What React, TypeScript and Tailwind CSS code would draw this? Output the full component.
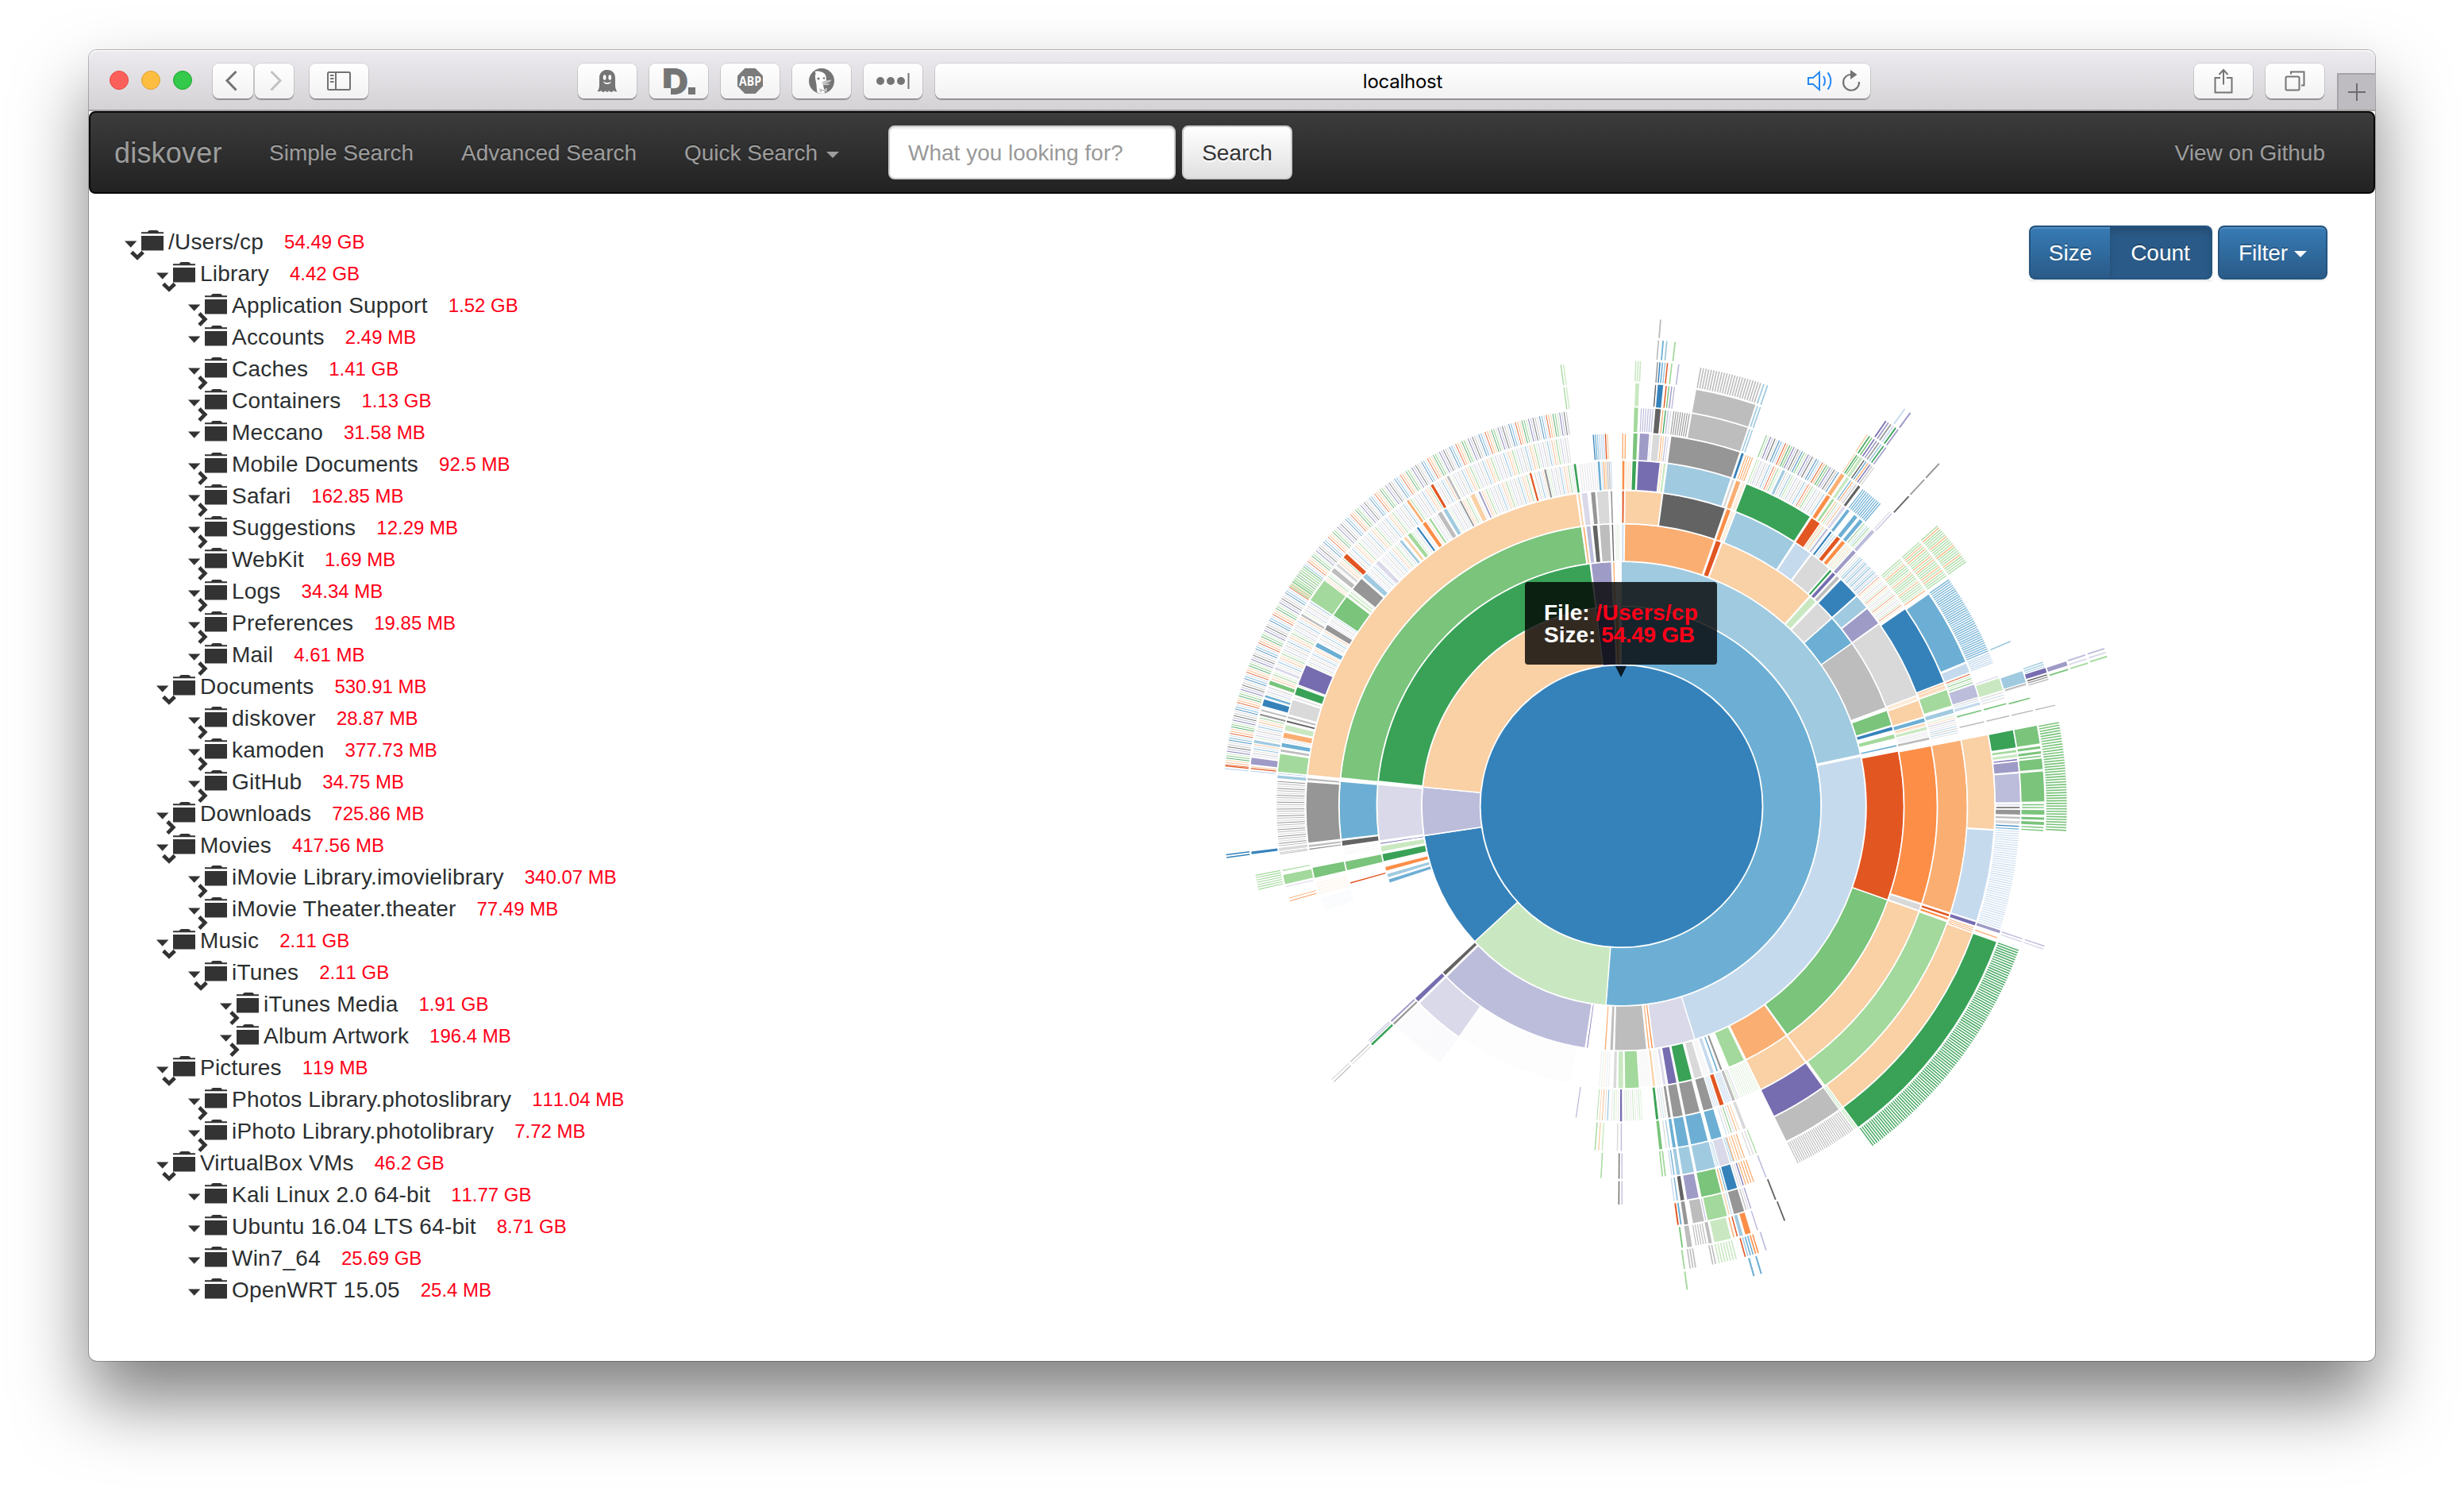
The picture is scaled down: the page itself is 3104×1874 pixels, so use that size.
import React from "react";

/* ------------------------------------------------------------------ */
/* Sunburst                                                            */
/* ------------------------------------------------------------------ */

const COLORS: Record<string, string> = {
  B0: "#3582bb", B1: "#6dafd4", B2: "#a0cae0", B3: "#c6daee",
  O0: "#e25622", O1: "#fc8e48", O2: "#faae72", O3: "#fad0a5",
  G0: "#39a257", G1: "#7ac47b", G2: "#a3d99c", G3: "#c9e8c1",
  P0: "#766db0", P1: "#9f9bc7", P2: "#bcbddb", P3: "#dad9e9",
  K0: "#636363", K1: "#969696", K2: "#bdbdbd", K3: "#d9d9d9",
};

const UNIT = 177.9;
const CX = 542.6;
const CY = 635.3;

type Arc = [ring: number, from: number, to: number, color: string];
type Comb = [ring: number, from: number, to: number, count: number, colors: string, width?: number, opacity?: number];

const ARCS: Arc[] = [
  // ring 1
  [1, 0, 184.45, "B1"], [1, 184.55, 227.25, "G3"], [1, 227.4, 261.4, "B0"], [1, 261.6, 275.4, "P2"],
  [1, 275.6, 352.5, "O3"], [1, 352.7, 357.8, "P0"], [1, 358.2, 359.2, "O2"],
  // ring 2
  [2, 0, 77.8, "B2"], [2, 78.35, 162.5, "B3"], [2, 162.6, 172.3, "P3"], [2, 172.55, 172.95, "O1"], [2, 173.3, 173.7, "O2"],
  [2, 174.1, 181.6, "K2"], [2, 181.95, 182.7, "K2"], [2, 183.6, 184, "O2"], [2, 187.9, 188.2, "P0"],
  [2, 188.6, 225.7, "P2"], [2, 226.15, 227.1, "K0"], [2, 251.7, 252.6, "B1"], [2, 253, 253.9, "B2"],
  [2, 254.6, 255.6, "O1"], [2, 256.9, 258.7, "G0"], [2, 259.25, 260.6, "G3"], [2, 261.05, 261.35, "P0"],
  [2, 261.9, 275, "P3"], [2, 275.9, 352.55, "G0"], [2, 352.85, 357.6, "P1"], [2, 358, 358.4, "O2"],
  // ring 3
  [3, 0.1, 0.5, "B3"], [3, 0.7, 19.2, "O2"], [3, 19.6, 20.7, "O0"], [3, 21, 41.8, "O3"], [3, 42.1, 43.6, "G3"],
  [3, 44, 48.15, "K3"], [3, 48.3, 54.7, "B1"], [3, 54.8, 69.5, "K2"], [3, 70.2, 73.3, "G1"], [3, 73.6, 74.4, "B0"],
  [3, 75.2, 76.1, "G2"], [3, 77.4, 77.8, "B1"], [3, 78.8, 109.35, "O0"], [3, 109.5, 144, "G1"], [3, 144.3, 153.75, "O2"],
  [3, 154.2, 157.6, "G2"], [3, 159, 159.5, "K1"], [3, 159.9, 160.3, "B1"], [3, 160.8, 161.6, "B3"], [3, 163.3, 165, "K3"],
  [3, 165.5, 168.3, "G0"], [3, 168.7, 170.5, "P0"], [3, 170.9, 171.5, "P3"], [3, 173.1, 173.6, "O3"],
  [3, 176.4, 179.3, "G2"], [3, 179.6, 180.7, "G3"], [3, 181, 181.7, "K3"], [3, 215.2, 225.7, "P3"], [3, 226.1, 227.1, "P0"],
  [3, 254, 254.35, "O0"], [3, 256.8, 258.7, "G1"], [3, 261.9, 263, "K0"], [3, 263.3, 275, "B1"], [3, 275.8, 351.8, "G1"],
  [3, 352.1, 352.5, "O2"], [3, 352.8, 353.7, "P2"], [3, 354.1, 355.1, "K0"], [3, 355.5, 357.6, "K2"], [3, 358, 358.35, "K0"],
  // ring 4
  [4, 0.1, 0.5, "O0"], [4, 0.7, 7.4, "O3"], [4, 7.6, 19.2, "K0"], [4, 19.5, 20.3, "O1"], [4, 21.3, 33.2, "B2"],
  [4, 33.5, 36.85, "B3"], [4, 37.1, 41.2, "K3"], [4, 41.4, 41.85, "G0"], [4, 42.1, 42.8, "P0"], [4, 43.1, 43.8, "K2"],
  [4, 44.1, 48.1, "B0"], [4, 48.3, 51, "B2"], [4, 51.2, 54.6, "P1"], [4, 54.8, 69.4, "K3"], [4, 70.4, 73.5, "O3"],
  [4, 73.75, 74.5, "B1"], [4, 75.4, 76, "G3"], [4, 77.35, 77.85, "K2"], [4, 79, 107.95, "O1"], [4, 108.2, 109.3, "K3"],
  [4, 109.5, 144.1, "O3"], [4, 144.35, 153.8, "O3"], [4, 158.8, 159.4, "K2"], [4, 161, 161.85, "O0"], [4, 163.1, 164.95, "K1"],
  [4, 165.6, 168.35, "K1"], [4, 168.75, 170.6, "K1"], [4, 170.95, 171.5, "K1"], [4, 173.2, 173.75, "G0"],
  [4, 179.85, 180.3, "P0"], [4, 226.05, 226.5, "K1"], [4, 226.75, 227.15, "P1"], [4, 256.8, 258.75, "G1"],
  [4, 262, 262.3, "K1"], [4, 262.5, 262.95, "K2"], [4, 263.3, 274.4, "K1"], [4, 274.7, 275.15, "K2"], [4, 275.7, 351.75, "O3"],
  [4, 352, 352.4, "O3"], [4, 352.7, 353.8, "P3"], [4, 354.4, 355.25, "K1"], [4, 355.5, 357.65, "K3"], [4, 358, 358.35, "K1"],
  // ring 5
  [5, 0.1, 0.55, "O1"], [5, 1.8, 2.5, "G0"], [5, 2.75, 6.4, "P0"], [5, 7, 7.4, "G3"], [5, 7.65, 18.45, "B2"],
  [5, 18.7, 19.15, "K3"], [5, 19.4, 20.2, "O2"], [5, 21.2, 33.1, "G0"], [5, 33.4, 35.1, "O0"], [5, 36.4, 36.8, "P2"],
  [5, 37.2, 37.6, "B0"], [5, 38.6, 39.35, "O0"], [5, 39.7, 40.4, "O1"], [5, 42.1, 42.8, "P1"], [5, 55.2, 68.95, "B0"],
  [5, 70.3, 73.1, "G2"], [5, 73.6, 74.35, "B2"], [5, 79, 107.95, "O2"], [5, 108.2, 108.65, "O0"], [5, 108.85, 109.25, "O1"],
  [5, 109.6, 143.9, "G2"], [5, 144.35, 153.8, "P0"], [5, 158.8, 159.4, "K3"], [5, 163.1, 164.95, "B1"], [5, 165.5, 168.4, "B1"],
  [5, 168.75, 170.6, "B1"], [5, 170.9, 171.5, "B1"], [5, 173.15, 173.75, "G1"], [5, 226.1, 226.55, "G0"],
  [5, 256.9, 258.55, "G2"], [5, 262.5, 263.1, "K3"], [5, 274.6, 275.15, "B2"], [5, 275.7, 278.75, "G2"],
  [5, 279.05, 279.5, "K2"], [5, 279.85, 280.6, "B1"], [5, 281.4, 282.35, "O2"], [5, 282.65, 283.65, "G3"],
  [5, 284.05, 284.4, "K0"], [5, 284.7, 285.1, "K2"], [5, 285.4, 287.95, "K3"], [5, 288.8, 290.2, "G0"],
  [5, 290.6, 294.1, "P0"], [5, 297.5, 298.3, "B1"], [5, 300.75, 301.7, "K1"], [5, 303.5, 307.3, "G1"],
  [5, 307.6, 308, "G3"], [5, 308.9, 311.2, "K1"], [5, 311.5, 312.4, "B2"], [5, 314.6, 315.4, "P3"],
  [5, 320, 320.5, "B2"], [5, 320.9, 321.4, "O3"], [5, 321.7, 322.4, "G2"], [5, 323.6, 324, "B0"], [5, 324.8, 325.5, "O1"],
  [5, 326.1, 326.5, "G2"], [5, 327.8, 328.6, "K2"], [5, 328.9, 329.6, "B2"], [5, 332, 332.35, "K1"],
  [5, 334, 334.85, "O3"], [5, 335.5, 335.85, "P1"], [5, 344.5, 344.9, "O0"], [5, 347, 347.4, "K1"],
  [5, 352, 352.45, "G0"], [5, 356, 356.45, "B1"],
  // ring 6
  [6, 1.8, 2.5, "G1"], [6, 2.8, 4.3, "P1"], [6, 4.8, 5.95, "K3"], [6, 7.65, 18.5, "K1"], [6, 18.75, 19.2, "B0"],
  [6, 25.6, 26.1, "B2"], [6, 33.4, 34.1, "O1"], [6, 34.4, 34.85, "G2"], [6, 36.4, 36.95, "P3"], [6, 37.2, 37.75, "B1"],
  [6, 38.6, 39.3, "B1"], [6, 39.7, 40.35, "B1"], [6, 42.15, 42.75, "P2"], [6, 55.4, 67.25, "B1"], [6, 67.5, 68.95, "B3"],
  [6, 70.95, 73, "P2"], [6, 73.75, 74.25, "B3"], [6, 79, 93.55, "O3"], [6, 93.75, 107.9, "B3"], [6, 108.1, 108.7, "P0"],
  [6, 109.9, 143.65, "O3"], [6, 144.35, 153.8, "K2"], [6, 163.1, 164.75, "P3"], [6, 165.4, 168.4, "B2"],
  [6, 168.75, 170.6, "B2"], [6, 170.9, 171.5, "B2"], [6, 262.55, 263.05, "B0"], [6, 276.4, 277.5, "P1"],
  [6, 279.75, 280.25, "B2"], [6, 284.05, 284.4, "K1"], [6, 284.75, 285.1, "K2"], [6, 285.6, 286.7, "B0"],
  [6, 286.95, 287.35, "B1"], [6, 289, 289.7, "G1"], [6, 291.5, 291.95, "P3"], [6, 300.7, 301.1, "K2"],
  [6, 303.5, 307.25, "G2"], [6, 308.9, 309.7, "K2"], [6, 310.1, 310.6, "K3"], [6, 311.8, 312.6, "O0"],
  [6, 324.8, 325.25, "O2"], [6, 329.2, 329.7, "O0"], [6, 332, 332.45, "K2"],
  // ring 7
  [7, 1.8, 2.45, "G2"], [7, 4.85, 5.7, "K0"], [7, 10.15, 18.5, "K2"], [7, 33.4, 34.05, "O2"], [7, 34.35, 34.85, "G3"],
  [7, 36.4, 36.85, "K0"], [7, 71.25, 73.1, "G3"], [7, 79, 81.55, "G0"], [7, 81.85, 82.25, "G2"], [7, 82.5, 82.95, "G3"],
  [7, 83.55, 85.05, "P1"], [7, 85.25, 89.45, "P2"], [7, 90.5, 91.25, "K1"], [7, 91.5, 91.85, "K2"], [7, 92.1, 92.6, "K3"],
  [7, 108.1, 108.6, "P1"], [7, 109.9, 143.6, "G0"], [7, 163.1, 164.6, "B0"], [7, 165.5, 168.45, "G1"],
  [7, 168.8, 170.55, "P1"], [7, 170.9, 171.5, "K0"],
  // ring 8
  [8, 1.85, 2.45, "G3"], [8, 4.9, 5.7, "B0"], [8, 10.15, 18.5, "K2"], [8, 34.35, 34.8, "G3"], [8, 71.35, 73, "B2"],
  [8, 79, 81.5, "G1"], [8, 81.8, 82.2, "G1"], [8, 82.5, 82.9, "G1"], [8, 83.5, 85, "G1"], [8, 85.25, 89.4, "G1"],
  [8, 90.5, 91.2, "G1"], [8, 91.5, 91.9, "G1"], [8, 92.1, 92.6, "G1"], [8, 163.1, 164.6, "K1"], [8, 165.5, 168.25, "G2"],
  [8, 168.7, 170.3, "K2"], [8, 170.9, 171.5, "K1"],
  // ring 9 and 10
  [9, 71.9, 72.6, "P0"], [9, 163.1, 163.9, "O1"], [9, 164.15, 164.65, "B2"], [9, 165.75, 168, "G3"],
  [9, 168.25, 168.75, "K2"], [9, 170.85, 171.55, "K2"], [10, 71.95, 72.55, "P1"],
];

const CYCLE = "O0 O2 O3 G0 G1 G3 P0 P2 K0 K2 K3 B0 B1 B3";
const SOFT = "O2 O3 G1 G3 P2 P3 K2 K3 B1 B3";

const COMBS: Comb[] = [
  // upper left fringe
  [5, 278.9, 352, 205, SOFT, 0.85, 0.8], [6, 275.9, 351.8, 218, SOFT, 0.9, 0.85], [7, 275.8, 352.2, 234, CYCLE, 1, 0.85],
  [7, 303.4, 307.2, 11, "G2", 1.1], [5, 275.4, 275.5, 1, "B3", 1], [6, 275.2, 276, 2, "B3 O0", 1.2], [7, 275.2, 276, 2, "B3 O0", 1.2],
  [8, 352, 352.7, 2, "G2 G3", 1.3], [9, 352, 352.7, 2, "G2 G3", 1.3],
  [5, 352.8, 356, 8, "P3 K3", 0.9, 0.8], [5, 356.6, 358.4, 6, "B3 O2 O3 K2 K2", 1.2],
  [6, 355.5, 358, 8, "B0 B1 B2 B3 B3 B3 O0 O3", 1.3], [3, 358.7, 359.6, 3, "G3", 0.7, 0.6],
  // left and lower left
  [5, 263.2, 274.3, 29, "K2 K1 K3", 1], [5, 261.9, 262.4, 2, "K2", 1],
  [7, 262.4, 263.2, 2, "B0", 1.5], [6, 256.9, 259.5, 7, "G2", 1.2], [5, 259, 259.5, 1, "G2", 1.2], [5, 256.3, 256.7, 1, "P3", 1],
  [4, 253.6, 256, 6, "O3", 0.6, 0.4], [5, 253.8, 254.8, 2, "O1 O2", 0.9], [4, 250.5, 253, 6, "B3", 0.5, 0.4],
  [3, 260, 262, 4, "K3", 0.6, 0.4],
  [4, 215.2, 225.7, 32, "P3", 0.6, 0.5], [3, 190.5, 215, 70, "P3", 0.4, 0.25],
  [4, 188.1, 188.5, 1, "P2", 1.3], [5, 226.65, 227.3, 2, "P2", 1.1],
  [6, 226, 226.9, 2, "K3 K2", 1.2], [7, 226, 226.9, 2, "K2 K3", 1.2],
  // bottom
  [3, 182.4, 184.8, 5, "K3 B3 O3 G3", 0.7, 0.6], [4, 182.3, 184.7, 5, "B1 K3 O2 O3 G2", 1, 0.8],
  [4, 176, 182, 15, "G3 G2 K3", 0.8, 0.7], [3, 174, 176.2, 6, "K3", 0.7, 0.4],
  [5, 182.9, 184.7, 3, "G3 O3 G2", 1.4], [6, 183, 183.3, 1, "G2", 1.5],
  [5, 179.7, 181, 2, "P2 K3", 1.4], [6, 179.7, 180.6, 2, "P2 K0", 1.3], [7, 179.7, 180.6, 2, "P2 K0", 1.3],
  [4, 154, 157.8, 10, "G3", 0.9, 0.6], [3, 162, 163, 3, "K3", 0.7, 0.5], [3, 171.8, 172.8, 3, "K3", 0.7, 0.5],
  [4, 159.5, 160.8, 4, "B3", 1.1], [5, 159.8, 162.5, 6, "O3 O2 K3 G1 K3 B3", 1], [4, 158, 158.7, 2, "P3 G3", 1],
  [4, 162, 163, 3, "B3", 0.9], [4, 171.7, 172.9, 3, "K3 B3", 0.9],
  [6, 158.5, 160, 3, "G2 K3 K3", 1.2], [6, 160.5, 162.6, 5, "O2 O3", 1.2], [7, 160.4, 162, 4, "O2", 1.3],
  [7, 158.5, 158.9, 1, "P2", 1.6], [8, 158.4, 158.8, 1, "K0", 1.8], [9, 158.3, 158.7, 1, "K0", 1.8],
  [5, 171.7, 172.8, 2, "B2 K3", 1.2], [6, 171.7, 172.4, 2, "B1 B3", 1.3], [6, 173, 173.9, 2, "G2", 1.8],
  [7, 171.7, 172.6, 2, "B1 B3", 1.3], [8, 171.7, 172.5, 2, "B1 O0", 2], [9, 171.9, 172.4, 1, "G1", 1.9], [10, 172, 172.5, 1, "G2", 1.9], [11, 172, 172.5, 1, "G2", 1.9],
  [6, 162.4, 163, 2, "B2", 1], [6, 164.8, 165.4, 2, "B2", 1], [7, 162, 163, 3, "P0 P3 K3", 1.2], [7, 164.6, 165.4, 2, "B1 O2", 1.3],
  [8, 162, 163, 3, "P1 P3 K2", 1.2], [8, 164.7, 165.4, 2, "B3 O3", 1.4], [8, 168.3, 168.7, 1, "P2", 1.2],
  [9, 162, 162.4, 1, "P2", 1.5], [10, 161.7, 162.2, 1, "P2", 1.7], [9, 164.7, 165.6, 2, "O0 O2", 1.5], [9, 168.9, 170.5, 5, "K2", 1.2],
  [10, 162.8, 164.8, 6, "O1 O1 B1 B1 B2 O0", 1.6], [10, 165.6, 168.1, 7, "G3", 1.6], [10, 168.2, 168.9, 2, "K2", 1.6],
  [10, 170.7, 171.7, 3, "K2", 1.6], [11, 163.1, 163.6, 1, "B1", 2.1], [11, 164, 164.5, 1, "B1", 2.1],
  // lower right
  [7, 144.3, 153.8, 30, "K2", 1.15], [6, 143.7, 144.3, 2, "G2", 0.9], [7, 143.7, 144.2, 2, "G2", 0.9],
  [8, 109.8, 143.6, 100, "G0", 1.5, 0.9], [7, 93.5, 108, 44, "B3", 1.1, 0.9],
  [6, 108.9, 109.8, 3, "O2", 1], [7, 109.1, 109.5, 1, "O2", 1.4], [8, 108.1, 108.9, 2, "P2 P3", 1.5], [9, 108.1, 108.9, 2, "P2 P3", 1.5],
  [9, 79, 93.3, 41, "G1", 1.6], [8, 92.7, 93.5, 2, "G1", 1.4], [7, 92.7, 93.5, 2, "B0 B1", 1.2], [7, 83.2, 83.4, 1, "P0", 1.3],
  [8, 83.1, 83.3, 1, "G1", 1.4], [7, 89.6, 90.4, 2, "P3 K0", 1.4], [8, 89.6, 90.4, 2, "G1", 1.4],
  // small fan to the right
  [4, 74.7, 75.3, 2, "O2 O3", 0.9], [4, 76.1, 77.3, 4, "P3 K3", 0.6], [5, 74.6, 77.9, 9, "G3 O3 P2 K3 P3 B2 K2 B2 K3", 1, 0.75],
  [6, 74.9, 75.3, 1, "G1", 1.6], [7, 74.9, 75.3, 1, "G1", 1.6], [8, 75, 75.4, 1, "G1", 1.6], [6, 76.7, 77.1, 1, "K2", 1.5], [7, 76.7, 77.1, 1, "K2", 1.5],
  [8, 76.7, 77.1, 1, "K2", 1.5], [9, 76.7, 77.1, 1, "K2", 1.5],
  [6, 73, 73.7, 2, "K2 B3", 1], [7, 73.2, 74.4, 3, "K3 B3", 1.1], [8, 73.1, 73.5, 1, "K3", 1.3], [7, 70.8, 71.2, 1, "P3", 1.3],
  [8, 73, 73.3, 1, "K1", 1.5], [9, 71, 71.9, 3, "B2", 1.4], [9, 72.7, 73.6, 3, "K0 K1 K2", 1.4], [10, 72.8, 73.2, 1, "G1", 1.8],
  [11, 71.7, 73.2, 3, "P2 P3 G2", 1.9], [12, 71.7, 73.1, 3, "P2 P3 G2", 1.9],
  [4, 69.4, 70.2, 3, "O3", 0.8], [5, 69.1, 70.2, 4, "O2 O3", 1], [6, 69.1, 70.8, 5, "O0 G3 G1 G3 G1", 1],
  [7, 67.3, 69, 6, "B3", 1.3], [7, 55.2, 67.2, 38, "B1", 1.35, 0.9], [8, 66.9, 67.2, 1, "B2", 1.8],
  // upper right
  [5, 43.7, 48.1, 13, "B2 B1 P3", 1.1, 0.85], [5, 48.2, 54.8, 20, "O0 O3 G3 P2 K3 G2", 0.8, 0.8], [5, 42.9, 43.7, 2, "K3", 0.9],
  [6, 48.3, 54.8, 19, "G2 G2 G3 O2 G2", 1.15, 0.9], [7, 48.3, 54.8, 20, "G2 G2 O2 G2 O2 G2", 1.2, 0.9], [8, 48.3, 54.8, 21, "G2 O2 G2 G2 G2", 1.3, 0.9],
  [6, 40.5, 42.1, 5, "G1 G3 B2", 1], [5, 40.5, 42, 5, "G3 O3", 0.9], [5, 37.7, 38.5, 2, "B2", 1],
  [7, 42.2, 42.9, 2, "P3 P2", 1.2], [8, 42.7, 43, 1, "K0", 1.9], [9, 42.7, 43, 1, "K1", 1.7], [10, 42.7, 43, 1, "K1", 1.9],
  [7, 37.2, 40.7, 11, "B1", 1.25], [5, 35.2, 36.3, 4, "O2 G3", 0.9], [6, 35, 36.3, 4, "O2 G2 P3", 1], [5, 36.9, 37.2, 1, "P3", 1],
  [7, 35, 36.3, 4, "B1 O2 P3 K2", 1.2], [8, 33.4, 34.3, 3, "O3 G0 G1", 1.3], [8, 34.9, 36.9, 6, "K0 B1 O2 P0 K2 K3", 1.4],
  [9, 33.3, 36.6, 9, "O3 G0 G1 P0 P1 K1 B2 G0 P1", 1.6], [10, 34.3, 36.5, 6, "P0 P1 K1 B3 G0 P1", 1.8], [11, 35.3, 35.7, 1, "B3", 1.9], [11, 36.1, 36.5, 1, "P1", 2],
  [6, 21.2, 33.2, 34, "G2 G3 P2 P3 K2 K3 B1 B3 O0 O2 G1 G3 P2 P3 K2 K3 B1", 1, 0.85],
  [7, 21.2, 33.2, 36, "G1 G3 P0 P2 K0 K3 B0 B1 B3 O0 O2 G0 G1 P0 P2 K0 K2 B0", 1.15, 0.85],
  [5, 20.4, 21, 2, "O3", 0.8], [6, 19.4, 20.8, 4, "O2", 1.1], [4, 20.5, 21.1, 2, "O3", 0.7],
  [7, 18.6, 19.4, 2, "B2", 1.5], [8, 18.6, 19.4, 2, "B2", 1.7], [9, 18.4, 19.4, 2, "B2", 1.8],
  [9, 10.1, 18.4, 24, "K2", 1.6], [7, 7.4, 10, 8, "K1", 1.1],
  [7, 2.7, 4.7, 6, "P2", 1.2], [6, 4.3, 4.7, 1, "P3", 1], [5, 6.4, 6.9, 2, "O3", 0.9], [6, 6, 7.4, 4, "O2 O3 P2 P3", 1.2],
  [7, 5.8, 7.3, 4, "O2 G0 P2 P3", 1.3], [8, 4.5, 4.8, 1, "K0", 1.4], [8, 5.9, 7.4, 4, "O0 G1 P1 P2", 1.4],
  [9, 1.7, 2.6, 3, "G3", 1.5], [9, 4.5, 4.8, 1, "K1", 1.5], [9, 4.8, 6.1, 4, "B0 B1 B2 O0", 1.5], [9, 6.3, 6.7, 1, "G2", 1.7], [9, 7.2, 7.6, 1, "P2", 1.7],
  [10, 4.4, 4.7, 1, "K2", 1.7], [10, 4.9, 5.8, 2, "B1 B2", 1.8], [10, 6.4, 6.8, 1, "G2", 1.8], [11, 4.4, 4.8, 1, "K2", 1.9],
  [5, 0.6, 1.7, 3, "O3", 0.9, 0.8], [6, 0, 0.8, 2, "O2", 1.4],
];

const at = (r: number, deg: number) => {
  const t = (deg * Math.PI) / 180;
  return `${(CX + r * Math.sin(t)).toFixed(2)} ${(CY - r * Math.cos(t)).toFixed(2)}`;
};

function sector([ring, from, to]: Arc) {
  const r0 = UNIT * Math.sqrt(ring) + 0.9;
  const r1 = UNIT * Math.sqrt(ring + 1) - 0.9;
  const large = to - from > 180 ? 1 : 0;
  const pad = (r: number) => (0.35 / r) * 57.3;
  return (
    `M${at(r0, from + pad(r0))}A${r0} ${r0} 0 ${large} 1 ${at(r0, to - pad(r0))}` +
    `L${at(r1, to - pad(r1))}A${r1} ${r1} 0 ${large} 0 ${at(r1, from + pad(r1))}Z`
  );
}

function Sunburst() {
  return (
    <svg className="block h-[1280px] w-[1200px]" viewBox="0 0 1200 1280">
      {COMBS.map(([ring, from, to, count, colors, width = 1.2, opacity = 1], c) => {
        const palette = colors.split(" ");
        const step = (to - from) / count;
        const r0 = UNIT * Math.sqrt(ring) + 1.5;
        const r1 = UNIT * Math.sqrt(ring + 1) - 1.5;
        return (
          <g key={c} strokeWidth={width} opacity={opacity} fill="none">
            {Array.from({ length: count }, (_, i) => {
              const a = from + step * (i + 0.5);
              return <path key={i} d={`M${at(r0, a)}L${at(r1, a)}`} stroke={COLORS[palette[i % palette.length]]} />;
            })}
          </g>
        );
      })}
      {ARCS.map((arc, i) => (
        <path key={i} d={sector(arc)} fill={COLORS[arc[3]]} stroke="#fff" strokeWidth={3} style={{ paintOrder: "stroke" }} />
      ))}
      <circle cx={CX} cy={CY} r={UNIT - 0.9} fill={COLORS.B0} />
    </svg>
  );
}

/* ------------------------------------------------------------------ */
/* Directory tree                                                      */
/* ------------------------------------------------------------------ */

type Row = [depth: number, name: string, size: string, chevron: "open" | "closed" | "none"];

const ROWS: Row[] = [
  [0, "/Users/cp", "54.49 GB", "open"],
  [1, "Library", "4.42 GB", "open"],
  [2, "Application Support", "1.52 GB", "closed"],
  [2, "Accounts", "2.49 MB", "none"],
  [2, "Caches", "1.41 GB", "closed"],
  [2, "Containers", "1.13 GB", "closed"],
  [2, "Meccano", "31.58 MB", "none"],
  [2, "Mobile Documents", "92.5 MB", "closed"],
  [2, "Safari", "162.85 MB", "closed"],
  [2, "Suggestions", "12.29 MB", "closed"],
  [2, "WebKit", "1.69 MB", "closed"],
  [2, "Logs", "34.34 MB", "closed"],
  [2, "Preferences", "19.85 MB", "closed"],
  [2, "Mail", "4.61 MB", "closed"],
  [1, "Documents", "530.91 MB", "open"],
  [2, "diskover", "28.87 MB", "closed"],
  [2, "kamoden", "377.73 MB", "closed"],
  [2, "GitHub", "34.75 MB", "closed"],
  [1, "Downloads", "725.86 MB", "closed"],
  [1, "Movies", "417.56 MB", "open"],
  [2, "iMovie Library.imovielibrary", "340.07 MB", "closed"],
  [2, "iMovie Theater.theater", "77.49 MB", "closed"],
  [1, "Music", "2.11 GB", "open"],
  [2, "iTunes", "2.11 GB", "open"],
  [3, "iTunes Media", "1.91 GB", "closed"],
  [3, "Album Artwork", "196.4 MB", "closed"],
  [1, "Pictures", "119 MB", "open"],
  [2, "Photos Library.photoslibrary", "111.04 MB", "closed"],
  [2, "iPhoto Library.photolibrary", "7.72 MB", "closed"],
  [1, "VirtualBox VMs", "46.2 GB", "open"],
  [2, "Kali Linux 2.0 64-bit", "11.77 GB", "none"],
  [2, "Ubuntu 16.04 LTS 64-bit", "8.71 GB", "none"],
  [2, "Win7_64", "25.69 GB", "none"],
  [2, "OpenWRT 15.05", "25.4 MB", "none"],
];

const INDENT = ["pl-[44px]", "pl-[84px]", "pl-[124px]", "pl-[164px]"];

function TreeRow({ row: [depth, name, size, chevron] }: { row: Row }) {
  return (
    <li className={`flex h-10 items-start whitespace-nowrap leading-[43px] ${INDENT[depth]}`}>
      <svg className="h-[48px] w-[56px] shrink-0 overflow-visible" viewBox="0 0 56 48" fill="#333">
        <path d="M1 20.5h15.4l-7.7 8.2z" />
        <path d="M22 11.2h28v-2h-6c-.4-1.500-1.500-2.200-3-2.200h-8c-1.500 0-2.600.7-3 2.200h-8z" />
        <path d="M22 14h28v18.500H22z" />
        {chevron === "open" && <path d="M9.800 34.500l7.200 7 7.200-7" fill="none" stroke="#333" strokeWidth="4.800" />}
        {chevron === "closed" && <path d="M15 31.800l7.200 7.300-7.200 7.300" fill="none" stroke="#333" strokeWidth="4.800" />}
      </svg>
      <span className="text-[28px] tracking-[0.2px] text-[#2b2f31]">{name}</span>
      <span className="ml-[26px] text-[24px] text-[#ff0018] [font-kerning:none]">{size}</span>
    </li>
  );
}

/* ------------------------------------------------------------------ */
/* Browser toolbar                                                     */
/* ------------------------------------------------------------------ */

function ToolButton({ className = "", children }: { className?: string; children?: React.ReactNode }) {
  return (
    <div
      className={`mt-[17px] flex h-[44px] shrink-0 items-center justify-center rounded-[8px] bg-linear-to-b from-white to-[#f2f2f2] shadow-[0_0_0_1px_rgba(0,0,0,0.09),0_2px_1px_rgba(0,0,0,0.3)] ${className}`}
    >
      {children}
    </div>
  );
}

function Toolbar() {
  return (
    <div className="flex h-[77px] items-start rounded-t-[10px] border-b-2 border-[#a0a0a0] bg-linear-to-b from-[#edebef] to-[#d4d2d5] pl-[26px] shadow-[inset_0_2px_0_#f6f5f7]">
      <div className="mt-[26px] flex gap-4">
        <span className="size-6 rounded-full border border-[#e4463f] bg-[#fd605b]" />
        <span className="size-6 rounded-full border border-[#e0a033] bg-[#fdbd40]" />
        <span className="size-6 rounded-full border border-[#21a434] bg-[#33c94a]" />
      </div>
      <ToolButton className="ml-[26px] w-[51px]">
        <svg className="mr-1 h-[28px] w-[20px]" viewBox="0 0 20 28" fill="none" stroke="#737373" strokeWidth="3">
          <path d="M15.500 2L4 13.500l11.500 12" />
        </svg>
      </ToolButton>
      <ToolButton className="ml-[2px] w-[49px]">
        <svg className="h-[28px] w-[20px]" viewBox="0 0 20 28" fill="none" stroke="#c2c2c2" strokeWidth="3">
          <path d="M5.500 2L17 13.500l-11.500 12" />
        </svg>
      </ToolButton>
      <ToolButton className="ml-[20px] w-[74px]">
        <svg className="h-[24px] w-[30px]" viewBox="0 0 30 24" fill="none" stroke="#737373" strokeWidth="2">
          <rect x="1" y="1" width="28" height="22" rx="1.500" />
          <path d="M11 1v22M4 5h4.500M4 9h4.500M4 13h4.500" />
        </svg>
      </ToolButton>
      <ToolButton className="ml-[264px] w-[74px]">
        <svg className="h-[30px] w-[26px]" viewBox="0 0 26 30" fill="#757575">
          <path d="M13 1C6.500 1 3 5.500 3 11v9.500C3 24 1.800 26.500.6 28.200c2 .4 3.400 0 4.600-1.200.9 1.600 2 2.200 3.600 1.800 1-.3 1.500-.9 2-1.700.7 1.300 1.400 2 2.200 2s1.600-.7 2.200-2c.5.8 1 1.400 2 1.700 1.600.4 2.700-.2 3.600-1.800 1.200 1.200 2.600 1.600 4.600 1.200C24.200 26.500 23 24 23 20.500V11C23 5.500 19.500 1 13 1z" />
          <ellipse cx="9.700" cy="10.500" rx="1.900" ry="3.200" fill="#fff" />
          <ellipse cx="16.300" cy="10.500" rx="1.900" ry="3.200" fill="#fff" />
          <path d="M8 15.500c1.200 4.800 8.800 4.800 10 0-2.600 2.200-7.400 2.200-10 0z" fill="#fff" />
        </svg>
      </ToolButton>
      <ToolButton className="ml-4 w-[74px]">
        <div className="relative flex items-end font-['Inter',sans-serif] text-[46px] leading-[44px] font-black tracking-[-1px] text-[#757575]">
          D
          <span className="mb-[5px] ml-[1px] size-[9px] bg-[#757575]" />
          <span className="absolute bottom-[4px] left-[1px] h-[9px] w-[10px] bg-[#f4f4f4]" />
        </div>
      </ToolButton>
      <ToolButton className="ml-4 w-[74px]">
        <svg className="h-[32px] w-[32px]" viewBox="0 0 32 32">
          <path d="M9.400 0h13.200L32 9.400v13.200L22.600 32H9.400L0 22.600V9.400z" fill="#7b7b7b" />
          <text x="16" y="21.500" textAnchor="middle" fontFamily="Open Sans, sans-serif" fontWeight="700" fontSize="16" textLength="28" lengthAdjust="spacingAndGlyphs" fill="#fff">ABP</text>
        </svg>
      </ToolButton>
      <ToolButton className="ml-4 w-[74px]">
        <svg className="h-[32px] w-[32px]" viewBox="0 0 32 32">
          <circle cx="16" cy="16" r="16" fill="#757575" />
          <path d="M8.500 6.500c1-2.600 4-3.300 6.600-2 3.600.6 6.400 3.200 6.700 7.400l.2 3.600c-1.500.5-3 1.500-3.500 3-.8 2.500-.2 5 .6 7.500l1 5.400c-3.500.8-7 .4-9.600-1.200-.8-4.500-.6-8.500-1.600-13-.7-3.500-1.600-7-.4-10.700z" fill="#fff" />
          <path d="M8 5c2-.8 4-.4 5.500.8" stroke="#fff" strokeWidth="2" fill="none" />
          <circle cx="12" cy="13" r="1.600" fill="#757575" />
          <circle cx="19" cy="12.500" r="1.300" fill="#757575" />
          <path d="M17 17c3-2.200 7-1.800 11.500-2.600-1 3-5 4-8 4.300 2.500.6 5 .6 6.500.3-1.500 2.600-7 3-9.500 1.200-1-.8-1.200-2.200-.5-3.200z" fill="#c4c4c4" />
          <path d="M13 25l4.500 2 5.500-2.200-.6 5.200-4.500-1.500-3.900 2z" fill="#c4c4c4" />
        </svg>
      </ToolButton>
      <ToolButton className="ml-4 w-[74px]">
        <svg className="h-[22px] w-[42px]" viewBox="0 0 42 22" fill="#757575">
          <circle cx="5" cy="11" r="5" />
          <circle cx="18" cy="11" r="5" />
          <circle cx="31" cy="11" r="5" />
          <rect x="39.500" y="1" width="2" height="20" />
        </svg>
      </ToolButton>
      <ToolButton className="ml-4 w-[1178px] pr-[12px]">
        <span className="w-[80px]" />
        <span className="flex-1 pt-[2px] text-center font-['Inter',sans-serif] text-[24px] tracking-[-0.25px] text-black">localhost</span>
        <svg className="h-[28px] w-[68px]" viewBox="0 0 68 28" fill="none" strokeWidth="2">
          <g stroke="#2588f5">
            <path d="M2 10h6l8-7v22l-8-7H2z" />
            <path d="M21 8c2.600 3.500 2.600 8.500 0 12M26.500 3.500c5 6 5 15 0 21" />
          </g>
          <path d="M57 5.800A10 10 0 1 0 66 15" stroke="#757575" strokeWidth="2.200" />
          <path d="M55 0l8.500 6-8.500 6z" fill="#757575" />
        </svg>
      </ToolButton>
      <ToolButton className="ml-[408px] w-[74px]">
        <svg className="h-[32px] w-[24px]" viewBox="0 0 24 32" fill="none" stroke="#757575" strokeWidth="2">
          <path d="M8 12H1.500v18.500h21V12H16M12 20.500V2M6.500 8L12 2l5.500 6" />
        </svg>
      </ToolButton>
      <ToolButton className="ml-4 w-[74px]">
        <svg className="h-[26px] w-[26px]" viewBox="0 0 26 26" fill="none" stroke="#757575" strokeWidth="2">
          <rect x="1.500" y="7.500" width="17" height="17" rx="1.500" />
          <path d="M8 4.500V1.500h16.500V18.500H21" />
        </svg>
      </ToolButton>
      <div className="mt-[29px] ml-4 flex h-[46px] w-[48px] items-center justify-center border-t-2 border-l-2 border-[#a5a3a7] bg-[#bebcc0]">
        <svg className="size-[22px]" viewBox="0 0 22 22" stroke="#6c6b6e" strokeWidth="2">
          <path d="M11 0v22M0 11h22" />
        </svg>
      </div>
    </div>
  );
}

/* ------------------------------------------------------------------ */
/* Page                                                                */
/* ------------------------------------------------------------------ */

function Caret({ className = "" }: { className?: string }) {
  return <span className={`inline-block border-x-8 border-t-8 border-x-transparent border-t-current ${className}`} />;
}

function Navbar() {
  return (
    <nav className="flex h-[104px] items-center rounded-[8px] border-2 border-[#080808] bg-linear-to-b from-[#3c3c3c] to-[#222] pt-px text-[28px] text-[#9d9d9d] [text-shadow:0_-2px_0_rgba(0,0,0,0.25)]">
      <a className="w-[196px] pl-[30px] text-[36px] tracking-[0.2px]">diskover</a>
      <a className="w-[241px] pl-[29px]">Simple Search</a>
      <a className="w-[282px] pl-[30px]">Advanced Search</a>
      <a className="flex w-[256px] items-center pl-[29px]">
        Quick Search
        <Caret className="mt-1 ml-[11px]" />
      </a>
      <form className="-mt-px ml-[30px] flex gap-2">
        <div className="flex h-[68px] w-[362px] items-center rounded-[8px] border-2 border-[#ccc] bg-white pt-px pl-[23px] text-[#999] shadow-[inset_0_2px_2px_rgba(0,0,0,0.08)] [text-shadow:none]">
          What you looking for?
        </div>
        <div className="flex h-[68px] w-[139px] items-center justify-center rounded-[8px] border-2 border-[#ccc] bg-linear-to-b from-white to-[#e0e0e0] pt-px text-[#333] [text-shadow:0_2px_0_#fff]">
          Search
        </div>
      </form>
      <a className="mr-[61px] ml-auto">View on Github</a>
    </nav>
  );
}

export default function App() {
  return (
    <div className="h-[1874px] w-[3104px] overflow-hidden bg-white px-[112px] pt-[63px] font-['Liberation_Sans',Arial,sans-serif]">
      <div className="h-[1651px] rounded-[10px] bg-white shadow-[0_0_0_1px_rgba(0,0,0,0.25),0_50px_90px_rgba(0,0,0,0.5)]">
        <Toolbar />
        <Navbar />
        <main className="flex pt-[39px]">
          <ul className="w-[1388px]">
            {ROWS.map((row) => (
              <TreeRow key={row[1]} row={row} />
            ))}
          </ul>
          <section className="flex-1 pt-[1px]">
            <div className="mr-[60px] flex h-[68px] justify-end gap-[7px] text-[28px] text-white [text-shadow:0_-2px_0_rgba(0,0,0,0.2)]">
              <div className="flex shadow-[0_2px_3px_rgba(0,0,0,0.1)]">
                <span className="flex w-[102px] items-center justify-center rounded-l-[8px] border-2 border-r-0 border-[#245580] bg-linear-to-b from-[#377bb5] to-[#2a5b88] pt-px shadow-[inset_0_2px_0_rgba(255,255,255,0.15)]">
                  Size
                </span>
                <span className="flex w-[129px] items-center justify-center rounded-r-[8px] border-2 border-l-0 border-[#245580] bg-[#2a5b88] pt-px shadow-[inset_0_6px_10px_rgba(0,0,0,0.15)]">
                  Count
                </span>
              </div>
              <span className="flex w-[138px] items-center justify-center rounded-[8px] border-2 border-[#245580] bg-linear-to-b from-[#377bb5] to-[#2a5b88] pt-px shadow-[inset_0_2px_0_rgba(255,255,255,0.15),0_2px_3px_rgba(0,0,0,0.1)]">
                Filter
                <Caret className="mt-[2px] ml-[8px]" />
              </span>
            </div>
            <div className="relative mt-[28px] w-[1200px]">
              <Sunburst />
              <div className="absolute top-[353px] left-[421px] h-[104px] w-[242px] rounded-[4px] bg-black/80 pt-[25px] pl-[24px] text-[28px] leading-[28px] font-bold whitespace-nowrap text-white">
                <p>
                  File: <span className="tracking-[0.3px] text-[#ff0018]">/Users/cp</span>
                </p>
                <p>
                  Size: <span className="-ml-px tracking-[-0.3px] text-[#ff0018]">54.49 GB</span>
                </p>
                <span className="absolute top-[106px] left-[114px] border-x-[7px] border-t-[14px] border-x-transparent border-t-black/80" />
              </div>
            </div>
          </section>
        </main>
      </div>
    </div>
  );
}
